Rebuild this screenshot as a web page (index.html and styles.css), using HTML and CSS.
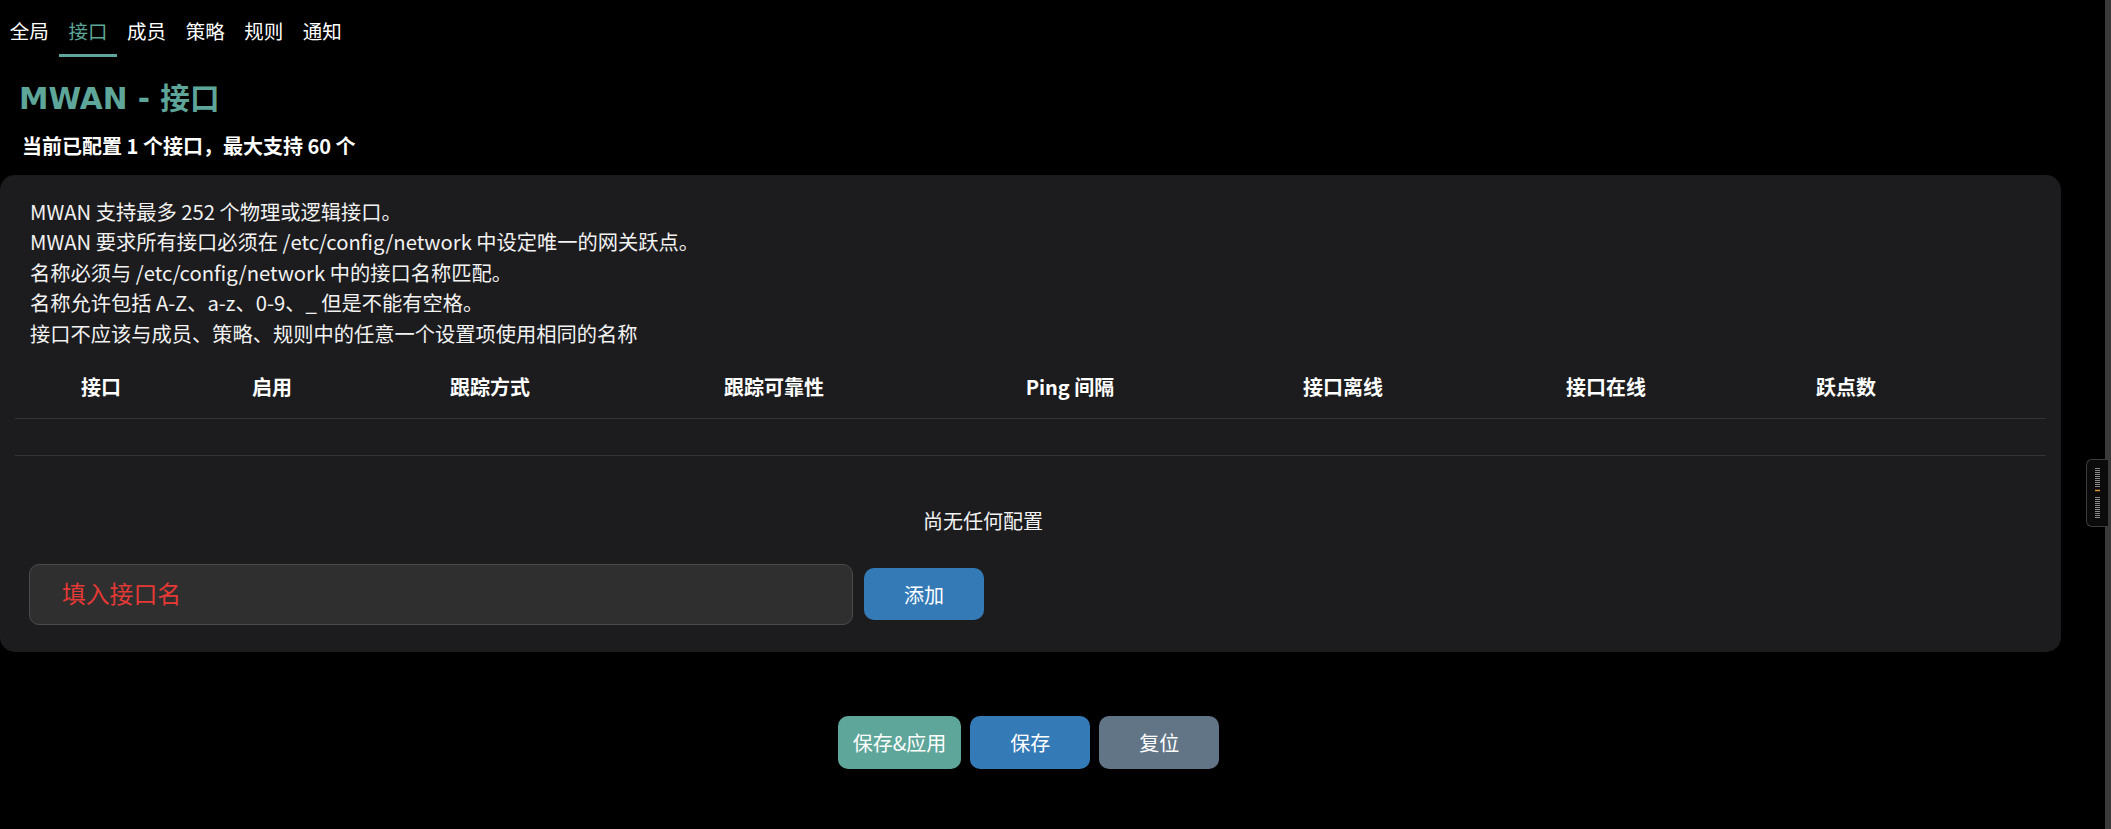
FILE: index.html
```html
<!DOCTYPE html>
<html lang="zh-CN">
<head>
<meta charset="utf-8">
<title>MWAN - 接口</title>
<link rel="stylesheet" href="styles.css">
</head>
<body>
<div class="main">
  <ul class="tabs">
    <li class="tab"><a>全局</a></li>
    <li class="tab active"><a>接口</a></li>
    <li class="tab"><a>成员</a></li>
    <li class="tab"><a>策略</a></li>
    <li class="tab"><a>规则</a></li>
    <li class="tab"><a>通知</a></li>
  </ul>
  <h2 class="title">MWAN - 接口</h2>
  <h3 class="subtitle">当前已配置 1 个接口，最大支持 60 个</h3>

  <div class="card">
    <div class="desc">
      <div>MWAN 支持最多 252 个物理或逻辑接口。</div>
      <div>MWAN 要求所有接口必须在 /etc/config/network 中设定唯一的网关跃点。</div>
      <div>名称必须与 /etc/config/network 中的接口名称匹配。</div>
      <div>名称允许包括 A-Z、a-z、0-9、_ 但是不能有空格。</div>
      <div>接口不应该与成员、策略、规则中的任意一个设置项使用相同的名称</div>
    </div>
    <div class="table">
      <div class="thead">
        <div class="th">接口</div>
        <div class="th">启用</div>
        <div class="th">跟踪方式</div>
        <div class="th">跟踪可靠性</div>
        <div class="th">Ping 间隔</div>
        <div class="th">接口离线</div>
        <div class="th">接口在线</div>
        <div class="th">跃点数</div>
        <div class="th"></div>
      </div>
      <div class="empty-row"></div>
      <div class="placeholder-row">
        <div class="placeholder-msg">尚无任何配置</div>
      </div>
    </div>
    <div class="add-row">
      <input class="name-input" type="text" placeholder="填入接口名">
      <button class="btn btn-add">添加</button>
    </div>
  </div>

  <div class="actions">
    <button class="btn btn-apply">保存&amp;应用</button>
    <button class="btn btn-save">保存</button>
    <button class="btn btn-reset">复位</button>
  </div>
</div>

<div class="scrollbar"></div>
<div class="side-widget">
  <svg width="22" height="68" viewBox="0 0 22 68">
    <g stroke="#8a8a8a" stroke-width="1">
      <line x1="9" y1="9.5" x2="14" y2="9.5"/>
      <line x1="9" y1="11.5" x2="14" y2="11.5"/>
      <line x1="9" y1="13.5" x2="14" y2="13.5"/>
      <line x1="9" y1="15.5" x2="14" y2="15.5"/>
      <line x1="9" y1="17.5" x2="14" y2="17.5"/>
      <line x1="9" y1="19.5" x2="14" y2="19.5"/>
      <line x1="9" y1="21.5" x2="14" y2="21.5"/>
      <line x1="9" y1="23.5" x2="14" y2="23.5"/>
      <line x1="9" y1="25.5" x2="14" y2="25.5"/>
      <line x1="9" y1="27.5" x2="14" y2="27.5"/>
      <line x1="9" y1="38.5" x2="14" y2="38.5"/>
      <line x1="9" y1="40.5" x2="14" y2="40.5"/>
      <line x1="9" y1="42.5" x2="14" y2="42.5"/>
      <line x1="9" y1="44.5" x2="14" y2="44.5"/>
      <line x1="9" y1="46.5" x2="14" y2="46.5"/>
      <line x1="9" y1="48.5" x2="14" y2="48.5"/>
      <line x1="9" y1="50.5" x2="14" y2="50.5"/>
      <line x1="9" y1="52.5" x2="14" y2="52.5"/>
      <line x1="9" y1="54.5" x2="14" y2="54.5"/>
      <line x1="9" y1="56.5" x2="14" y2="56.5"/>
      <line x1="9" y1="58.5" x2="14" y2="58.5"/>
    </g>
    <line x1="9" y1="31.5" x2="14" y2="31.5" stroke="#e0922e" stroke-width="1.5"/>
  </svg>
</div>
</body>
</html>
```

FILE: styles.css
```css
* { box-sizing: border-box; }

html, body {
  margin: 0;
  padding: 0;
  background: #000;
  color: #fff;
  font-family: "Noto Sans CJK SC", "Noto Sans", sans-serif;
}

.main {
  padding-right: 50px;
}

.tabs {
  list-style: none;
  margin: 0;
  padding: 0;
  display: flex;
}

.tab a {
  display: block;
  font-size: 19.5px;
  line-height: 27px;
  padding: 17px 9.8px 10px;
  border-bottom: 3px solid transparent;
  color: #fff;
}

.tab.active a {
  color: #5ea699;
  border-bottom-color: #5ea699;
}

.title {
  margin: 24px 0 0;
  padding-left: 19px;
  font-family: "DejaVu Sans", "Noto Sans CJK SC", sans-serif;
  font-weight: bold;
  font-size: 29.6px;
  line-height: 36px;
  color: #5ea699;
}

.subtitle {
  margin: 15px 0 0;
  padding-left: 22px;
  font-size: 20px;
  line-height: 27px;
  font-weight: bold;
  color: #fff;
}

.card {
  margin-top: 16px;
  background: #1c1c1e;
  border-radius: 15px;
  padding: 21.7px 15px 27px;
}

.desc {
  padding-left: 15px;
  font-size: 20.25px;
  line-height: 30.6px;
  color: #f2f2f2;
}

.table {
  margin-top: 5.3px;
}

.thead {
  display: grid;
  grid-template-columns: 172px 170px 266px 302px 290px 256px 270px 210px 1fr;
  border-bottom: 1px solid #333;
}

.th {
  text-align: center;
  font-size: 20px;
  font-weight: bold;
  line-height: 29px;
  padding: 17px 0;
  min-height: 63px;
}

.empty-row {
  height: 37px;
  border-bottom: 1px solid #333;
}

.placeholder-row {
  width: 1936px;
  padding-top: 50.5px;
  text-align: center;
}

.placeholder-msg {
  font-size: 20px;
  line-height: 29px;
  color: #f2f2f2;
}

.add-row {
  margin-top: 28.5px;
  padding-left: 14px;
  display: flex;
  align-items: center;
  gap: 11px;
}

.name-input {
  width: 824px;
  height: 61px;
  background: #2f2f2f;
  border: 1px solid #4a4a4a;
  border-radius: 10px;
  padding: 0 0 4px 32px;
  font-family: "Noto Sans CJK SC", sans-serif;
  font-size: 23.8px;
  color: #fff;
  outline: none;
}

.name-input::placeholder {
  color: #e53935;
  opacity: 1;
}

.btn {
  border: none;
  border-radius: 10px;
  color: #fff;
  font-family: "Noto Sans CJK SC", sans-serif;
  font-size: 20px;
  cursor: pointer;
}

.btn-add {
  width: 120px;
  height: 52px;
  background: #337ab7;
}

.actions {
  margin: 64px 4px 0 0;
  display: flex;
  justify-content: center;
  gap: 9px;
}

.actions .btn {
  height: 53px;
  min-width: 120px;
  padding: 0 15px;
}

.btn-apply { background: #5ea699; }
.btn-save { background: #337ab7; }
.btn-reset { background: #627587; }

.scrollbar {
  position: fixed;
  top: 0;
  right: 0;
  width: 6px;
  height: 100%;
  background: #3a3a3a;
}

.side-widget {
  position: fixed;
  top: 459px;
  right: 3px;
  width: 22px;
  height: 68px;
  background: #0b0b0b;
  border: 1px solid #3d3d3d;
  border-right: none;
  border-radius: 6px 0 0 6px;
}

.side-widget svg {
  display: block;
  margin: -1px 0 0 -1px;
}
```
